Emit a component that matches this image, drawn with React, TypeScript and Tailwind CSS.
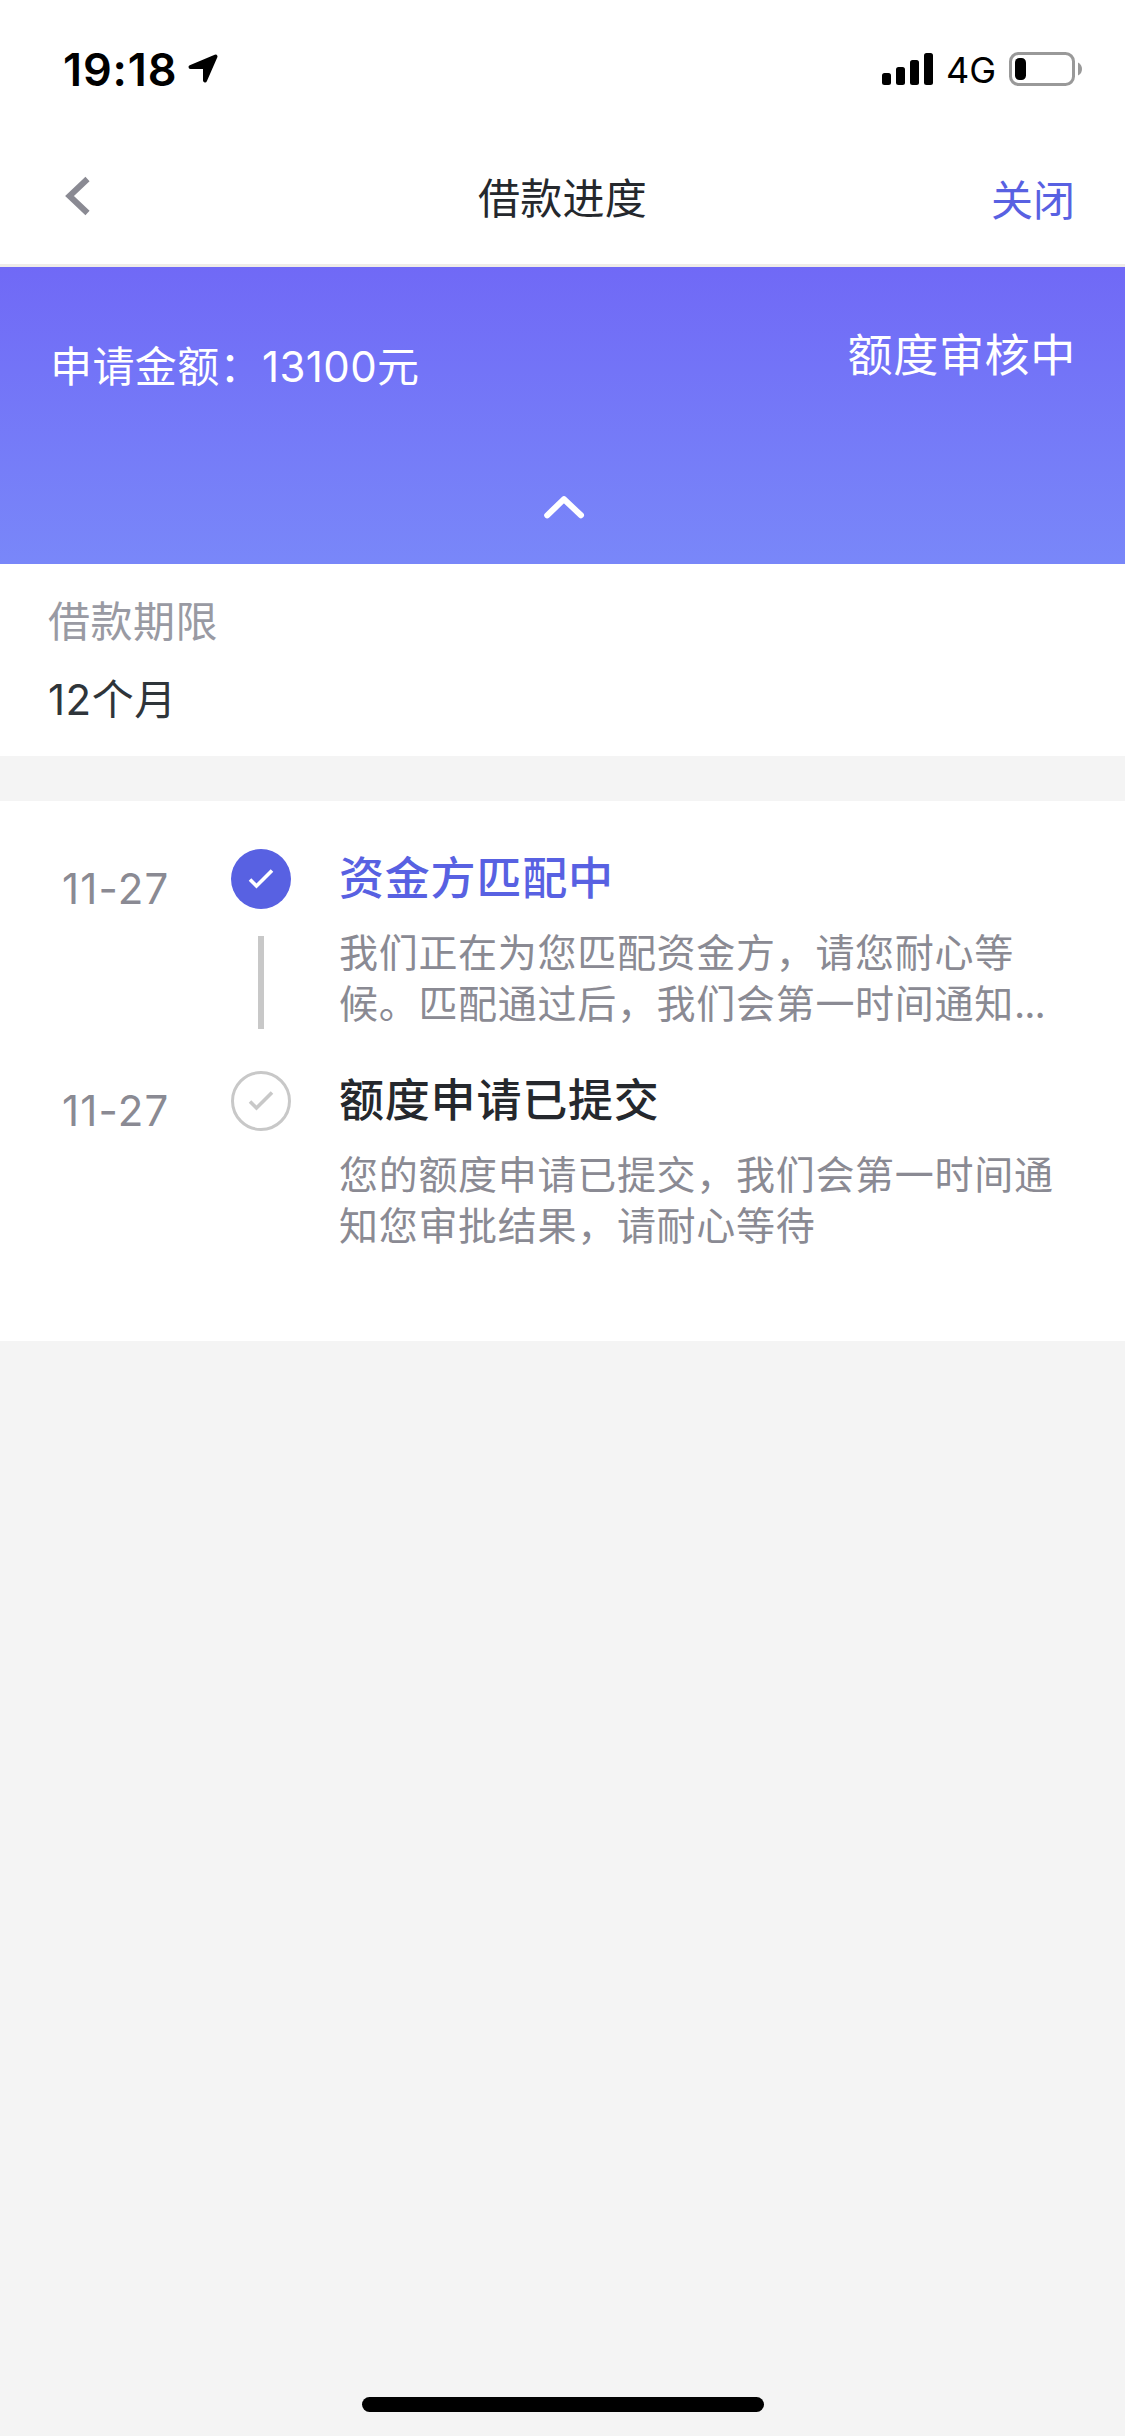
interface ProgressStep {
    id: number;
    date: string;
    title: string;
    desc: string;
    active: boolean;
}

const steps: ProgressStep[] = [
    {
        id: 1,
        date: '11-27',
        title: '资金方匹配中',
        desc: '我们正在为您匹配资金方，请您耐心等\n候。匹配通过后，我们会第一时间通知',
        active: true,
    },
    {
        id: 2,
        date: '11-27',
        title: '额度申请已提交',
        desc: '您的额度申请已提交，我们会第一时间通\n知您审批结果，请耐心等待',
        active: false,
    },
];

const StatusBar: React.FC = () => (
    <div className="flex h-[138px] items-start justify-between pl-[63px] pr-[42px] text-black">
        <div className="flex pt-[44px]">
            <span className="w-[124px] text-[45px] font-semibold leading-[51px] tracking-[0.9px]">19:18</span>
            <svg className="mt-[9px]" width="32" height="32" viewBox="0 0 32 32">
                <path d="M3.5 14 28.5 3.5 18 27.5V14Z" fill="#000" stroke="#000" strokeWidth="4" strokeLinejoin="round" />
            </svg>
        </div>
        <div className="flex pt-[44px]">
            <svg className="mt-[9px]" width="51" height="32" viewBox="0 0 51 32">
                <rect x="0" y="20" width="9" height="12" rx="2.5" />
                <rect x="14" y="14" width="9" height="18" rx="2.5" />
                <rect x="28" y="7" width="9" height="25" rx="2.5" />
                <rect x="42" y="0" width="9" height="32" rx="2.5" />
            </svg>
            <span className="ml-[13px] w-[63px] text-[36px] leading-[52px]">4G</span>
            <svg className="mt-[8px]" width="74" height="34" viewBox="0 0 74 34">
                <rect x="1.5" y="1.5" width="63" height="31" rx="8" fill="none" stroke="#999" strokeWidth="3" />
                <rect x="6" y="6" width="11" height="22" rx="4.5" />
                <path d="M69 10.500c3 1.500 4 4 4 6.500s-1 5-4 6.500Z" fill="#999" />
            </svg>
        </div>
    </div>
);

const StepIcon: React.FC<{ active: boolean }> = ({ active }) => (
    <svg width="60" height="60" viewBox="0 0 60 60" fill="none">
        {active ? (
            <circle cx="30" cy="30" r="30" fill="#5861e2" />
        ) : (
            <circle cx="30" cy="30" r="28.5" stroke="#c8c8c8" strokeWidth="3" />
        )}
        <path d="M19 30.500 25.500 37 41 21.500" stroke={active ? '#fff' : '#c8c8c8'} strokeWidth="3.6" />
    </svg>
);

export default function App() {
    return (
        <div className="flex h-[2436px] w-[1125px] flex-col bg-[#f4f4f4] font-['Inter','Noto_Sans_CJK_SC',sans-serif]">
            <header className="h-[267px] border-b-[3px] border-[#efece8] bg-white">
                <StatusBar />
                <div className="grid grid-cols-3 px-[51px]">
                    <button type="button" className="flex pl-[14px] pt-[38px]">
                        <svg width="26" height="40" viewBox="0 0 26 40" fill="none">
                            <path d="M22.500 3 4.500 20 22.500 37" stroke="#8a8a93" strokeWidth="6" />
                        </svg>
                    </button>
                    <h1 className="pt-[36px] text-center text-[42px] leading-[50px] tracking-[0.2px] text-[#25282d]">借款进度</h1>
                    <button type="button" className="-mr-[1px] pt-[38px] text-right text-[42px] leading-[50px] text-[#5861e2]">关闭</button>
                </div>
            </header>

            <section className="flex h-[297px] flex-col bg-linear-to-b from-[#7069f6] to-[#7987f9] text-white">
                <div className="flex justify-between pl-[50px] pr-[49px]">
                    <span className="pt-[75px] text-[42px] leading-[50px] tracking-[0.4px]">申请金额：13100元</span>
                    <span className="pt-[64px] text-[45px] leading-[50px] tracking-[0.7px]">额度审核中</span>
                </div>
                <svg className="ml-[542px] mt-[101px]" width="44" height="30" viewBox="0 0 44 30" fill="none">
                    <path d="M5.200 22.300 22 6.200 39 22.300" stroke="#fff" strokeWidth="6" strokeLinecap="round" strokeLinejoin="round" />
                </svg>
            </section>

            <section className="h-[192px] bg-white pl-[48px] pt-[33px] text-[42px] leading-[50px] tracking-[0.5px]">
                <p className="text-[#999aa3]">借款期限</p>
                <p className="mt-[28px] text-[#2f353a]">12个月</p>
            </section>

            <section className="mt-[45px] h-[540px] bg-white pt-[48px]">
                {steps.map((step, index) => (
                    <div key={step.id} className="flex h-[222px]">
                        <span className="w-[231px] pl-[62px] pt-[15px] text-[42px] leading-[50px] tracking-[1.2px] text-[#8a8a93]">{step.date}</span>
                        <div className="flex w-[60px] flex-col items-center">
                            <StepIcon active={step.active} />
                            {index < steps.length - 1 && <div className="mt-[27px] h-[93px] w-[6px] bg-[#c8c8c8]" />}
                        </div>
                        <div className="pl-[48px]">
                            <h2 className={`text-[45px] font-medium leading-[60px] tracking-[0.8px] ${step.active ? 'text-[#5861e2]' : 'text-[#25282d]'}`}>
                                {step.title}
                            </h2>
                            <p className="mt-[18px] whitespace-pre text-[39px] leading-[51px] tracking-[0.7px] text-[#8a8a93]">
                                {step.desc}
                                {step.active && <span className="tracking-[-1px]">...</span>}
                            </p>
                        </div>
                    </div>
                ))}
            </section>

            <div className="mx-auto mb-[24px] mt-auto h-[15px] w-[402px] rounded-full bg-black" />
        </div>
    );
}
